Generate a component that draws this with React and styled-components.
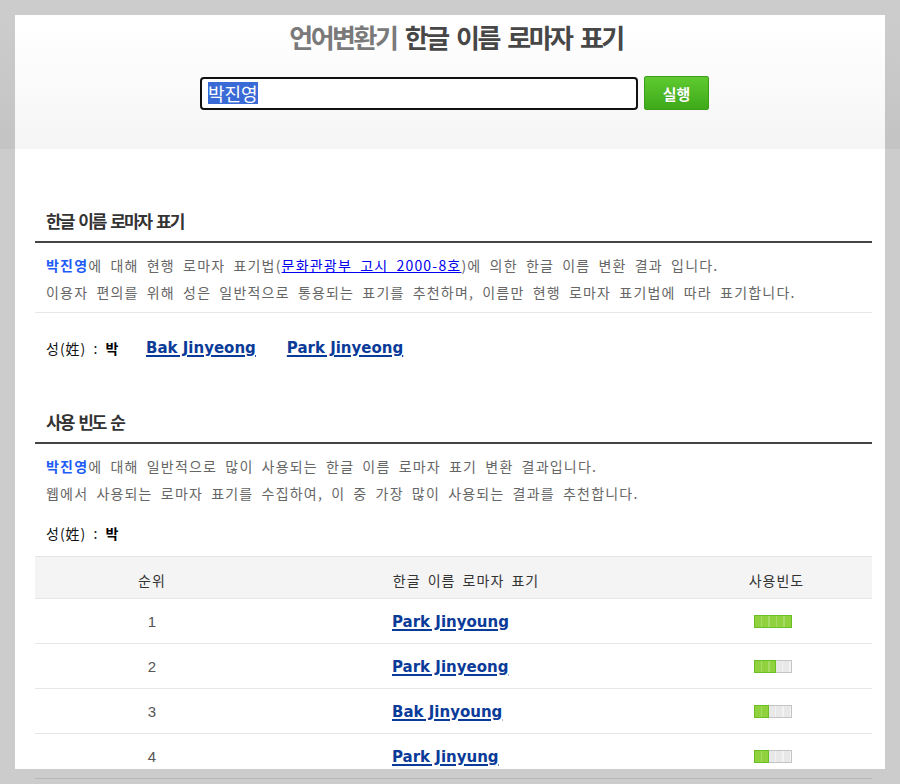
import React from "react";
import styled, { createGlobalStyle } from "styled-components";

const KR = `"Noto Sans CJK KR", "Noto Sans", sans-serif`;
const LATIN = `"DejaVu Sans", Verdana, sans-serif`;

const Global = createGlobalStyle`
  html, body { margin: 0; padding: 0; background: #fff; overflow: hidden; }
  body { font-family: ${KR}; }
`;

const Page = styled.div`
  width: 900px;
`;

const Spotlight = styled.div`
  position: fixed;
  top: 15px;
  left: 15px;
  width: 870px;
  height: 754px;
  box-shadow: 0 0 0 1200px rgba(0, 0, 0, 0.2);
  pointer-events: none;
`;

const Header = styled.header`
  height: 149px;
  box-sizing: border-box;
  background: linear-gradient(#fff 15%, #f5f5f5);
  display: flex;
  flex-direction: column;
  align-items: center;
  padding: 20px 0 0 12px;
`;

const Title = styled.h1`
  margin: 0;
  font-size: 26px;
  line-height: 34px;
  font-weight: 700;
  letter-spacing: -2.5px;
  word-spacing: 5px;
  color: #474747;
`;

const TitleLight = styled.span`
  color: #7a7a7a;
`;

const SearchRow = styled.div`
  display: flex;
  align-items: center;
  gap: 6px;
  margin-top: 22px;
  margin-left: -3px;
`;

const InputBox = styled.div`
  width: 438px;
  height: 33px;
  box-sizing: border-box;
  border: 2px solid #111;
  border-radius: 4px;
  background: #fff;
  padding: 0 6px;
  display: flex;
  align-items: center;
`;

const Selected = styled.span`
  background: #3a6ad5;
  color: #fff;
  font-size: 18px;
  line-height: 22px;
`;

const RunButton = styled.button`
  width: 65px;
  height: 34px;
  box-sizing: border-box;
  border: 1px solid #3b9d18;
  border-radius: 2px;
  background: linear-gradient(#5fcb30, #3ea91a);
  color: #fff;
  font-family: ${KR};
  font-weight: 700;
  font-size: 15px;
  padding: 0;
  text-shadow: 0 0 1px rgba(0, 0, 0, 0.2);
`;

const Content = styled.main`
  padding: 0 28px 0 35px;
`;

const SectionTitle = styled.h2`
  margin: ${(p) => p.$top}px 0 0;
  padding: 0 0 8px 11px;
  font-size: 17px;
  line-height: 24px;
  font-weight: 700;
  letter-spacing: -2px;
  word-spacing: 3px;
  color: #333;
  border-bottom: 2px solid #444;
`;

const Desc = styled.div`
  padding: 9px 11px ${(p) => (p.$divider ? 6 : 0)}px;
  font-size: 14px;
  line-height: 27px;
  color: #666;
  letter-spacing: 1.2px;
  word-spacing: 3.8px;
  border-bottom: ${(p) => (p.$divider ? "1px solid #e8e8e8" : "none")};
`;

const Line = styled.div`
  white-space: nowrap;
`;

const NameEm = styled.b`
  color: #1d5cf5;
  font-weight: 700;
`;

const LawLink = styled.a`
  color: #0000ee;
  text-decoration: underline;
`;

const SurnameRow = styled.div`
  display: flex;
  align-items: center;
  margin-top: ${(p) => p.$top}px;
  padding-left: 11px;
  line-height: 26px;
  gap: 31px;
`;

const SurnameLabel = styled.span`
  width: ${(p) => (p.$wide ? "69px" : "auto")};
  font-size: 14px;
  color: #111;
  letter-spacing: 1px;
  word-spacing: 3px;
  white-space: nowrap;
`;

const Strong = styled.b`
  color: #000;
`;

const RomanLink = styled.a`
  font-family: ${LATIN};
  font-weight: 700;
  font-size: 15px;
  color: #0b3b98;
  text-decoration: underline;
  text-decoration-thickness: 2px;
  text-underline-offset: 2px;
`;

const Table = styled.div`
  margin-top: 10px;
  border-top: 1px solid #e6e6e6;
`;

const Row = styled.div`
  display: grid;
  grid-template-columns: 234px 394px 1fr;
  align-items: center;
  height: ${(p) => (p.$head ? 41 : 44)}px;
  border-bottom: 1px solid #e6e6e6;
  background: ${(p) => (p.$head ? "#f4f4f4" : "#fff")};
`;

const HeadCell = styled.div`
  text-align: center;
  font-size: 14px;
  color: #333;
  letter-spacing: 1px;
  word-spacing: 3px;
  padding-top: 4px;
  padding-left: ${(p) => p.$pl || 0}px;
`;

const RankCell = styled.div`
  text-align: center;
  font-family: "Liberation Sans", Arial, sans-serif;
  font-size: 15px;
  color: #555;
`;

const NameCell = styled.div`
  padding-left: 123px;
  padding-bottom: 3px;
`;

const BarCell = styled.div`
  display: flex;
  justify-content: center;
  padding-left: 10px;
`;

const Bar = styled.div`
  display: flex;
  width: 38px;
  height: 13px;
`;

const BarFill = styled.div`
  box-sizing: border-box;
  height: 100%;
  border: 1px solid #6cbf22;
  background: repeating-linear-gradient(90deg, #8fd23d 0 6px, #a6dc66 6px 7.4px);
`;

const BarEmpty = styled.div`
  flex: 1;
  box-sizing: border-box;
  height: 100%;
  border: 1px solid #c4c4c4;
  border-left: none;
  background: repeating-linear-gradient(90deg, #e8e8e8 0 6px, #f3f3f3 6px 7.4px);
`;

const rows = [
  { rank: 1, name: "Park Jinyoung", level: 5 },
  { rank: 2, name: "Park Jinyeong", level: 3 },
  { rank: 3, name: "Bak Jinyoung", level: 2 },
  { rank: 4, name: "Park Jinyung", level: 2 },
];

function FreqBar({ level }) {
  return (
    <Bar>
      <BarFill style={{ width: `${level * 20}%` }} />
      {level < 5 && <BarEmpty />}
    </Bar>
  );
}

export default function App() {
  return (
    <>
      <Global />
      <Page>
        <Header>
          <Title>
            <TitleLight>언어변환기</TitleLight> 한글 이름 로마자 표기
          </Title>
          <SearchRow>
            <InputBox>
              <Selected>박진영</Selected>
            </InputBox>
            <RunButton>실행</RunButton>
          </SearchRow>
        </Header>
        <Content>
          <SectionTitle $top={60}>한글 이름 로마자 표기</SectionTitle>
          <Desc $divider>
            <Line>
              <NameEm>박진영</NameEm>에 대해 현행 로마자 표기법(
              <LawLink href="#">문화관광부 고시 2000-8호</LawLink>)에 의한 한글 이름 변환 결과 입니다.
            </Line>
            <Line>
              이용자 편의를 위해 성은 일반적으로 통용되는 표기를 추천하며, 이름만 현행 로마자 표기법에 따라 표기합니다.
            </Line>
          </Desc>
          <SurnameRow $top={22}>
            <SurnameLabel $wide>
              성(姓) : <Strong>박</Strong>
            </SurnameLabel>
            <RomanLink href="#">Bak Jinyeong</RomanLink>
            <RomanLink href="#">Park Jinyeong</RomanLink>
          </SurnameRow>

          <SectionTitle $top={49}>사용 빈도 순</SectionTitle>
          <Desc>
            <Line>
              <NameEm>박진영</NameEm>에 대해 일반적으로 많이 사용되는 한글 이름 로마자 표기 변환 결과입니다.
            </Line>
            <Line>웹에서 사용되는 로마자 표기를 수집하여, 이 중 가장 많이 사용되는 결과를 추천합니다.</Line>
          </Desc>
          <SurnameRow $top={13}>
            <SurnameLabel>
              성(姓) : <Strong>박</Strong>
            </SurnameLabel>
          </SurnameRow>

          <Table>
            <Row $head>
              <HeadCell>순위</HeadCell>
              <HeadCell>한글 이름 로마자 표기</HeadCell>
              <HeadCell $pl={18}>사용빈도</HeadCell>
            </Row>
            {rows.map((r) => (
              <Row key={r.rank}>
                <RankCell>{r.rank}</RankCell>
                <NameCell>
                  <RomanLink href="#">{r.name}</RomanLink>
                </NameCell>
                <BarCell>
                  <FreqBar level={r.level} />
                </BarCell>
              </Row>
            ))}
          </Table>
        </Content>
      </Page>
      <Spotlight />
    </>
  );
}
